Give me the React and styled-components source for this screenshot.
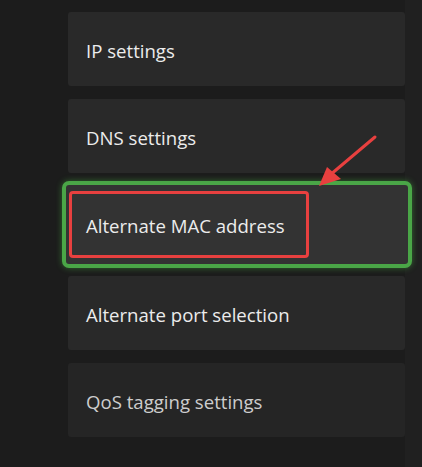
import React from "react";
import styled, { createGlobalStyle } from "styled-components";

const GlobalStyle = createGlobalStyle`
  html, body {
    margin: 0;
    padding: 0;
    background: #1c1c1c;
  }
  body {
    font-family: "Open Sans", "Noto Sans", sans-serif;
  }
`;

const Page = styled.div`
  position: relative;
  width: 422px;
  height: 467px;
  overflow: hidden;
  background: linear-gradient(to right, #1c1c1c 0, #1c1c1c 405px, #202020 405px);
`;

const List = styled.div`
  display: flex;
  flex-direction: column;
  gap: 13px;
  width: 337px;
  padding: 12px 0 0 68px;
`;

const Item = styled.div`
  position: relative;
  display: flex;
  align-items: center;
  box-sizing: border-box;
  height: ${(p) => (p.focused ? "87px" : "74px")};
  margin: ${(p) => (p.focused ? "-5px -7px -5px -6px" : "0")};
  padding: ${(p) => (p.focused ? "2px 0 0 20px" : "2px 0 0 18px")};
  background: ${(p) => (p.focused ? "#333333" : p.dim ? "#252525" : "#292929")};
  border: ${(p) => (p.focused ? "4px solid #4aa647" : "none")};
  border-radius: ${(p) => (p.focused ? "7px" : "3px")};
  box-shadow: ${(p) =>
    p.focused ? "0 0 6px rgba(80, 200, 70, 0.45)" : "none"};
  color: ${(p) => (p.dim ? "#cdcdcd" : "#ececec")};
  font-size: 18.6px;
`;

const Highlight = styled.div`
  position: absolute;
  left: 3px;
  top: 6px;
  width: 240px;
  height: 67px;
  box-sizing: border-box;
  border: 3px solid #e8403f;
  border-radius: 4px;
`;

const Arrow = styled.svg`
  position: absolute;
  left: 300px;
  top: 125px;
  overflow: visible;
`;

const items = [
  { label: "IP settings" },
  { label: "DNS settings" },
  { label: "Alternate MAC address", focused: true },
  { label: "Alternate port selection" },
  { label: "QoS tagging settings", dim: true },
];

export default function App() {
  return (
    <>
      <GlobalStyle />
      <Page>
        <List>
          {items.map((it) => (
            <Item key={it.label} focused={it.focused} dim={it.dim}>
              {it.focused && <Highlight />}
              {it.label}
            </Item>
          ))}
        </List>
        <Arrow width="90" height="70" viewBox="0 0 90 70">
          <line x1="75" y1="12" x2="30" y2="50" stroke="#e8403f" strokeWidth="3" strokeLinecap="round" />
          <polygon points="19,61 27,42 41,54" fill="#e8403f" />
        </Arrow>
      </Page>
    </>
  );
}
